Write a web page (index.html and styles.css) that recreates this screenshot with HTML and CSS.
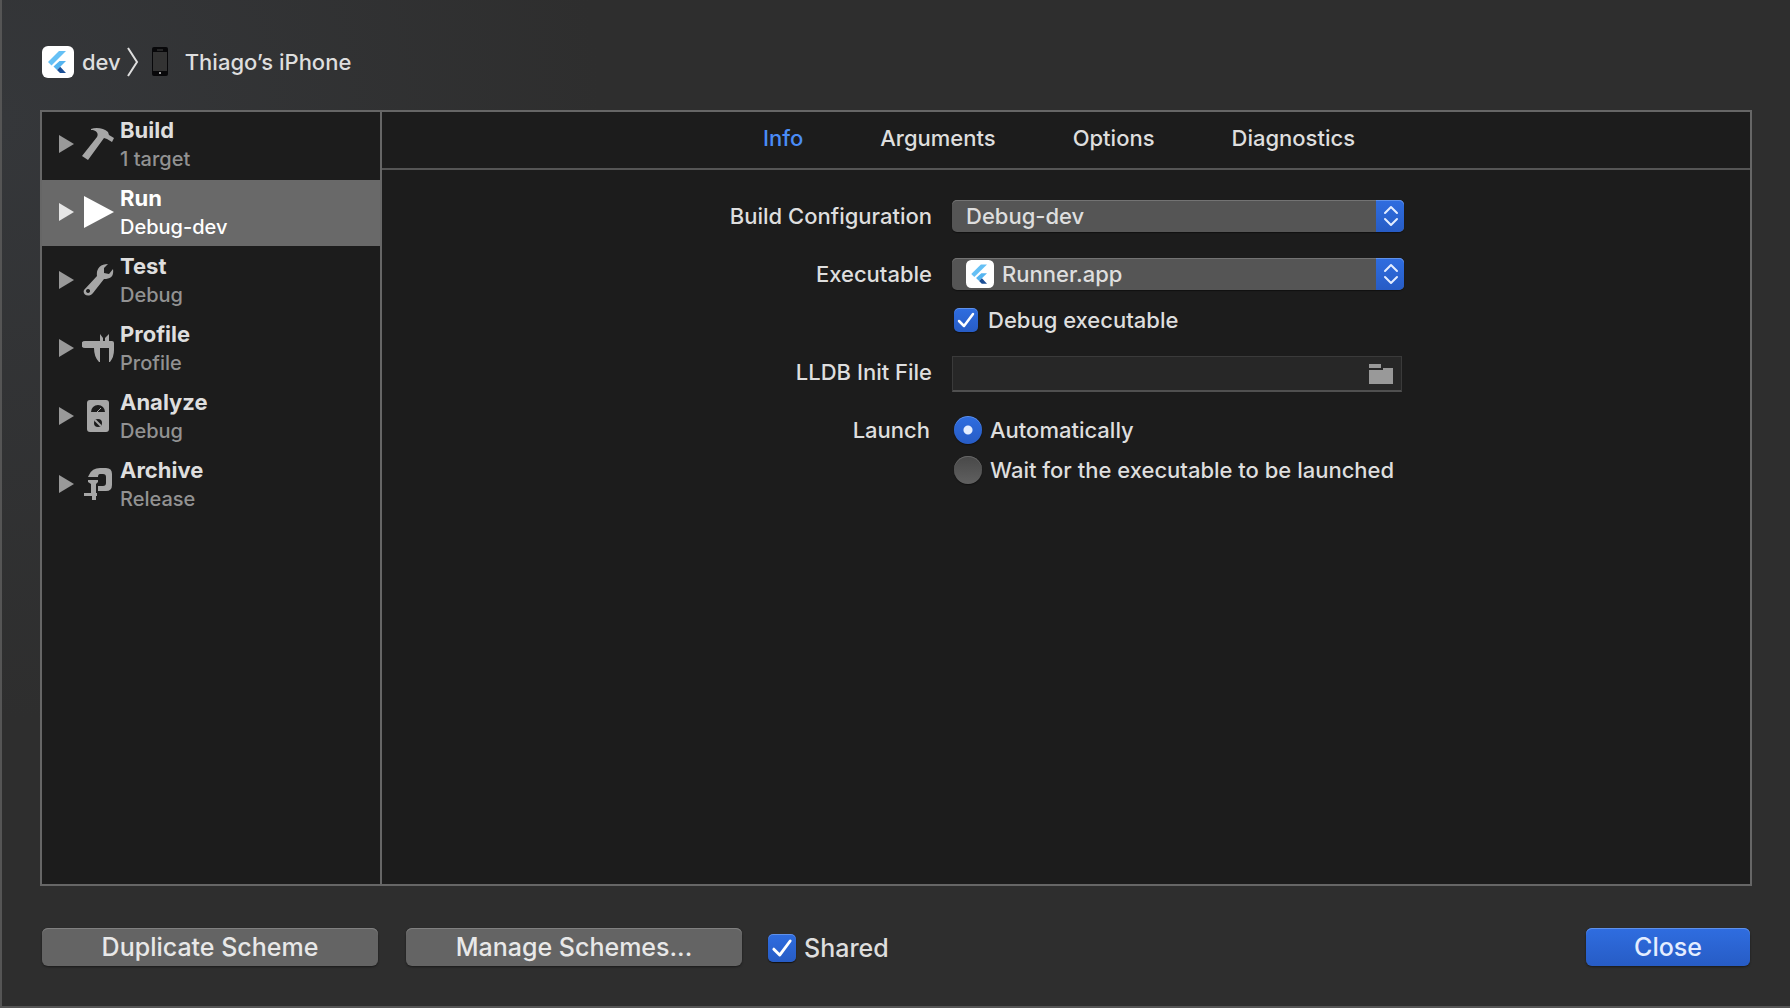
FILE: index.html
```html
<!DOCTYPE html>
<html lang="en">
<head>
<meta charset="utf-8">
<title>Scheme Editor</title>
<link rel="stylesheet" href="styles.css">
</head>
<body>
<svg class="defs" aria-hidden="true">
  <symbol id="flutter" viewBox="0 0 32 32">
    <rect width="32" height="32" rx="6" fill="#fff"/>
    <path d="M17 5h7L9.500 19.500 6 16z" fill="#65c0f5"/>
    <path d="M17.500 15H24l-9 9-3.500-3.500z" fill="#54b4f0"/>
    <path d="M15 24l3.200-3.200L24 27h-6z" fill="#1c4f96"/>
  </symbol>
  <symbol id="updown" viewBox="0 0 28 32">
    <path d="M9 13l6-6 6 6M9 19l6 6 6-6" fill="none" stroke="#e4edff" stroke-width="2" stroke-linecap="round" stroke-linejoin="round"/>
  </symbol>
</svg>
<main class="sheet">
  <header class="crumbs">
    <svg class="app-icon"><use href="#flutter"/></svg>
    <span class="scheme">dev</span>
    <svg class="chevron" viewBox="0 0 12 32"><path d="M1 2l9 14-9 14" fill="none" stroke="#dedede" stroke-width="2"/></svg>
    <svg class="phone" viewBox="0 0 18 32"><rect x="1" y="1" width="16" height="29" rx="2" fill="#08080a"/><rect x="2" y="6" width="14" height="19" fill="#333"/><path d="M6 4h6" stroke="#444"/><rect x="8" y="26" width="2" height="2" fill="#999"/></svg>
    <span>Thiago’s iPhone</span>
  </header>

  <section class="panel">
    <nav class="actions">
      <a class="action" href="#build">
        <svg class="arrow" viewBox="0 0 15 18"><path d="M0 0l15 9-15 9z"/></svg>
        <svg class="icon" viewBox="0 0 32 32"><path d="M9 1C14-1 22 0 26 4l1 3 5 3-2 4-5-3-3-1L6 32l-6-4L15 9c2-4-1-7-6-7z"/></svg>
        <span class="text"><b>Build</b><small>1 target</small></span>
      </a>
      <a class="action selected" href="#run" aria-current="page">
        <svg class="arrow" viewBox="0 0 15 18"><path d="M0 0l15 9-15 9z"/></svg>
        <svg class="icon" viewBox="0 0 32 32"><path d="M2 0l30 16L2 32z"/></svg>
        <span class="text"><b>Run</b><small>Debug-dev</small></span>
      </a>
      <a class="action" href="#test">
        <svg class="arrow" viewBox="0 0 15 18"><path d="M0 0l15 9-15 9z"/></svg>
        <svg class="icon" viewBox="0 0 32 32"><path fill-rule="evenodd" d="M26 0l-4 4v5l5 1 4-5c1 7-2 10-9 10L11 29c-4 5-11 2-9-3l13-14C14 5 18 0 26 0zM6 25a2 2 0 1 0 .1 0z"/></svg>
        <span class="text"><b>Test</b><small>Debug</small></span>
      </a>
      <a class="action" href="#profile">
        <svg class="arrow" viewBox="0 0 15 18"><path d="M0 0l15 9-15 9z"/></svg>
        <svg class="icon" viewBox="0 0 32 32"><path d="M3 9h15V2l3 4v3h2V6l4-4v7h3q2 0 2 2v7q0 7-4 12h-1V16h-9v14h-1q-5-5-5-14H3a3.500 3.500 0 0 1 0-7z"/></svg>
        <span class="text"><b>Profile</b><small>Profile</small></span>
      </a>
      <a class="action" href="#analyze">
        <svg class="arrow" viewBox="0 0 15 18"><path d="M0 0l15 9-15 9z"/></svg>
        <svg class="icon" viewBox="0 0 32 32"><rect x="5" width="22" height="32" rx="3"/><path d="M9 12a7 7 0 0 1 14 0z" fill="#1c1c1c"/><path d="M15 12l4-4" stroke="#a6a6a6"/><circle cx="16" cy="23" r="4" fill="#1c1c1c"/><path d="M13 20l6 6" stroke="#a6a6a6" stroke-width="2"/></svg>
        <span class="text"><b>Analyze</b><small>Debug</small></span>
      </a>
      <a class="action" href="#archive">
        <svg class="arrow" viewBox="0 0 15 18"><path d="M0 0l15 9-15 9z"/></svg>
        <svg class="icon" viewBox="0 0 32 32"><path d="M7 7q3-7 11-7h6q6 0 6 6v11q0 6-6 6h-8v-5h5q3 0 3-3V9q0-3-3-3h-3q-2 0-2 3H6zM6 12h10v2l-2 2v9h1v3h-1v4h-4v-4H2v-3h7v-9l-3-2z"/></svg>
        <span class="text"><b>Archive</b><small>Release</small></span>
      </a>
    </nav>

    <div class="detail">
      <nav class="tabs">
        <a class="current" href="#info" aria-current="page">Info</a>
        <a href="#arguments">Arguments</a>
        <a href="#options">Options</a>
        <a href="#diagnostics">Diagnostics</a>
      </nav>
      <form class="settings">
        <label class="name" for="config">Build Configuration</label>
        <div class="control">
          <div class="popup">
            <select id="config"><option>Debug-dev</option></select>
            <svg class="cap"><use href="#updown"/></svg>
          </div>
        </div>

        <label class="name" for="exe">Executable</label>
        <div class="control stack">
          <div class="popup with-icon">
            <select id="exe"><option>Runner.app</option></select>
            <svg class="lead"><use href="#flutter"/></svg>
            <svg class="cap"><use href="#updown"/></svg>
          </div>
          <label class="choice"><input type="checkbox" checked>Debug executable</label>
        </div>

        <label class="name" for="lldb">LLDB Init File</label>
        <div class="control file">
          <input id="lldb" type="text">
          <button type="button" aria-label="Choose file"><svg viewBox="0 0 24 20"><path d="M0 0h12v4H0zM14 4h10v16H0V6h14z"/></svg></button>
        </div>

        <span class="name group-name" id="launch">Launch</span>
        <div class="control radios" role="radiogroup" aria-labelledby="launch">
          <label class="choice"><input type="radio" name="launch" checked>Automatically</label>
          <label class="choice"><input type="radio" name="launch">Wait for the executable to be launched</label>
        </div>
      </form>
    </div>
  </section>

  <footer class="footer">
    <button class="button wide" type="button">Duplicate Scheme</button>
    <button class="button wide" type="button">Manage Schemes...</button>
    <label class="choice shared"><input type="checkbox" checked>Shared</label>
    <button class="button primary" type="button">Close</button>
  </footer>
</main>
</body>
</html>
```
FILE: styles.css
```css
* { box-sizing: border-box; }

body {
  margin: 0;
  color: #dedede;
  font: 500 22px/28px Inter, "Liberation Sans", sans-serif;
  background: #2e2e2e;
}

a { color: inherit; text-decoration: none; }
button, input, select { margin: 0; font: inherit; color: inherit; }
.defs { display: none; }

.sheet {
  display: flex;
  flex-direction: column;
  min-height: 100vh;
  padding: 46px 38px 40px;
  border-left: 2px solid #555;
  border-bottom: 2px solid #555;
  background: radial-gradient(circle at 0 12%, #35373a, #2e2e2e 30%);
}

.crumbs {
  display: flex;
  align-items: center;
  height: 32px;
  margin: 0 2px 32px;
}
.app-icon { width: 32px; height: 32px; margin-right: 8px; }
.chevron { width: 12px; height: 32px; margin: 0 12px 0 6px; }
.phone { width: 18px; height: 32px; margin-right: 16px; }

.panel {
  display: flex;
  flex: 1;
  border: 2px solid #666;
  background: #1c1c1c;
}

.actions {
  display: flex;
  flex-direction: column;
  flex: 0 0 340px;
  gap: 2px;
  border-right: 2px solid #666;
}
.action {
  display: flex;
  align-items: center;
  height: 66px;
  padding: 4px 17px 6px;
  color: #929292;
}
.arrow { width: 15px; height: 18px; margin-right: 8px; fill: #999; }
.icon { width: 32px; height: 32px; margin-right: 6px; fill: #a6a6a6; }
.text { display: flex; flex-direction: column; }
.text b { color: #dedede; font-weight: 700; }
.text small { padding-top: 1px; margin-bottom: -1px; font-size: 20px; }
.selected { background: #696969; color: #fff; }
.selected b { color: #fff; }
.selected .arrow { fill: #e6e6e6; }
.selected .icon { fill: #fff; }

.detail { flex: 1; min-width: 0; }
.tabs {
  display: flex;
  justify-content: center;
  gap: 77px;
  padding: 12px 14px 16px 0;
  border-bottom: 2px solid #555;
}
.current { color: #4a8cf7; }

.settings {
  display: grid;
  grid-template-columns: 550fr 798fr;
  gap: 24px 20px;
  padding-top: 30px;
}
.name { padding-top: 2px; text-align: right; }
.group-name { padding: 0 2px 0 0; }
.control { max-width: 452px; }
.stack { display: flex; flex-direction: column; gap: 18px; }

.popup { position: relative; height: 32px; }
.control:first-of-type { padding-bottom: 2px; }
.popup select {
  width: 100%;
  height: 32px;
  padding: 0 40px 0 14px;
  border: 0;
  border-radius: 5px;
  appearance: none;
  background: #555;
  box-shadow: inset 0 1px #737373, 0 1px 1px #111;
}
.popup.with-icon select { padding-left: 50px; }
.lead { position: absolute; top: 2px; left: 14px; width: 28px; height: 28px; pointer-events: none; }
.cap {
  position: absolute;
  top: 0;
  right: 0;
  width: 28px;
  height: 32px;
  border-radius: 0 5px 5px 0;
  background: linear-gradient(#2f6de0, #275cc5);
  box-shadow: inset 0 1px #5f91ea;
  pointer-events: none;
}

.choice { display: flex; align-items: center; gap: 10px; height: 24px; }
.choice input {
  flex: none;
  width: 24px;
  height: 24px;
  margin-left: 2px;
  border-radius: 5px;
  appearance: none;
  background: linear-gradient(#484848, #606060);
  box-shadow: inset 0 1px #666, 0 1px 1px #111;
}
.choice input:checked {
  background: linear-gradient(#2f6de0, #275cc5);
  box-shadow: inset 0 1px #5f91ea, 0 1px 1px #111;
}
.choice input[type="checkbox"]:checked {
  background: url("data:image/svg+xml,%3Csvg xmlns='http://www.w3.org/2000/svg' viewBox='0 0 24 24'%3E%3Cpath d='M5 13l5 5 9-12' fill='none' stroke='white' stroke-width='2.500' stroke-linecap='round' stroke-linejoin='round'/%3E%3C/svg%3E"), linear-gradient(#2f6de0, #275cc5);
}
.choice input[type="radio"] { width: 28px; height: 28px; border-radius: 50%; }
.choice input[type="radio"]:checked {
  background: radial-gradient(circle, #e4edff 4px, transparent 5px), linear-gradient(#2f6de0, #275cc5);
}
.radios { display: flex; flex-direction: column; gap: 12px; }
.radios .choice { height: 28px; gap: 8px; }

.file {
  display: flex;
  height: 36px;
  max-width: 450px;
  border: 1px solid #3a3a3a;
  border-bottom: 2px solid #505050;
  background: #272727;
}
.file input { flex: 1; min-width: 0; padding: 0 8px; border: 0; background: none; }
.file button { width: 40px; padding: 0 8px; border: 0; background: none; }
.file svg { display: block; width: 24px; height: 20px; fill: #999; }

.footer {
  display: flex;
  align-items: center;
  height: 38px;
  margin: 42px 2px 0;
  font-size: 25px;
}
.button {
  height: 38px;
  padding: 0 20px;
  border: 0;
  border-radius: 6px;
  color: #e8e8e8;
  background: #646464;
  box-shadow: inset 0 1px #808080, 0 1px 2px #1a1a1a;
}
.wide { flex: 0 0 336px; margin-right: 28px; }
.shared { gap: 8px; height: 38px; padding-top: 2px; }
.shared input { width: 28px; height: 28px; margin-left: -2px; }
.primary {
  width: 164px;
  margin-left: auto;
  color: #e4edff;
  background: linear-gradient(#2f6de0, #275cc5);
  box-shadow: inset 0 1px #5f91ea, 0 1px 2px #1a1a1a;
}
```
